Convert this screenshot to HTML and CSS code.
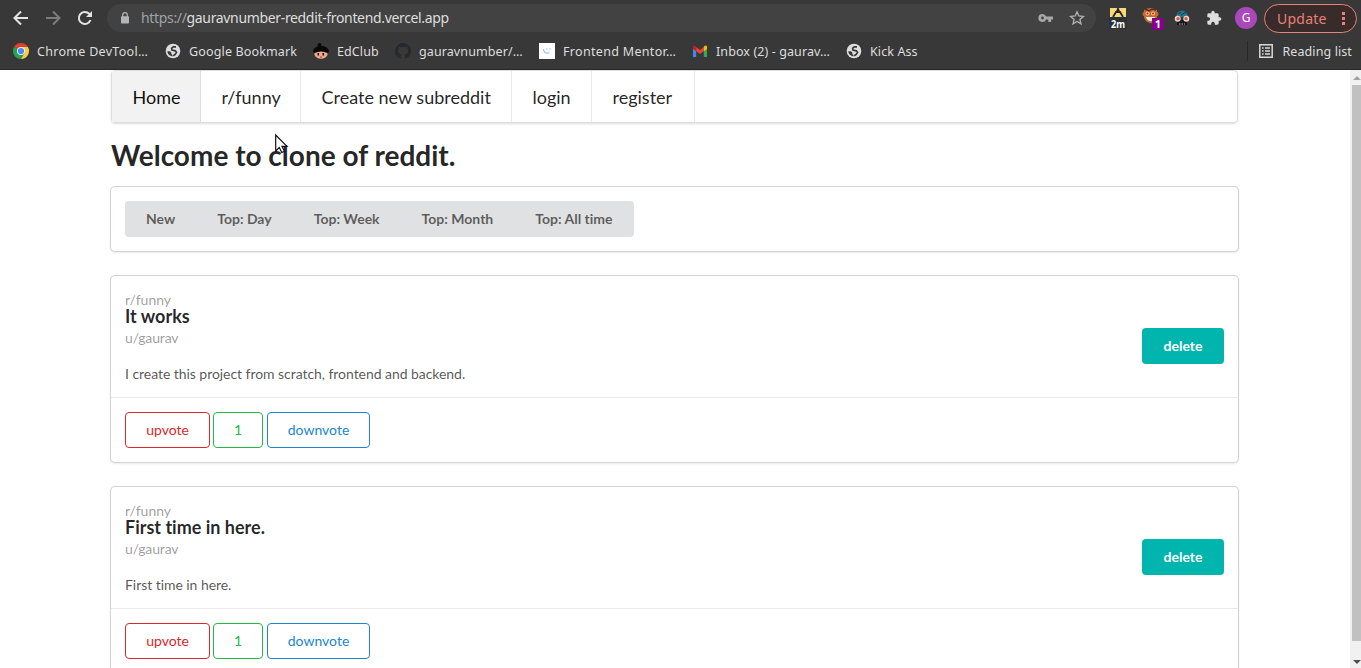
FILE: index.html
```
<!DOCTYPE html>
<html lang="en">
<head>
<meta charset="utf-8">
<title>Reddit clone</title>
<link rel="stylesheet" href="styles.css">
</head>
<body>
<svg width="0" height="0" class="defs">
  <symbol id="globe" viewBox="0 0 16 16"><circle cx="8" cy="8" r="7.300" fill="#dedede"/><path d="M11 3.800H8.300L6.600 5.200 7 7l3.300.8 1.200 1.500-1.300 2.200-2 1.300" fill="none" stroke="#383838" stroke-width="1.700"/><path d="M2.300 8.300h2.500l1.500 1.300v1.600l1.200.8v1.500C4.500 13 2.500 11 2.300 8.300z" fill="#383838"/></symbol>
</svg>
<header class="browser">
  <div class="toolbar">
    <svg class="nav-icon" viewBox="0 0 16 16"><path d="M15 8H2M8 1.500 1.500 8 8 14.500" fill="none" stroke="#e4e4e4" stroke-width="2"/></svg>
    <svg class="nav-icon" viewBox="0 0 16 16"><path d="M1 8h13M8 1.500 14.500 8 8 14.500" fill="none" stroke="#7d7d7d" stroke-width="2"/></svg>
    <svg class="nav-icon" viewBox="0 0 16 16"><path d="M13.500 10A6 6 0 1 1 12.200 3.800L14 5.600" fill="none" stroke="#e4e4e4" stroke-width="2"/><path d="M15 1v6H9z" fill="#e4e4e4"/></svg>
    <div class="address">
      <svg class="lock" viewBox="0 0 8 12"><path d="M1.700 5V3a2.300 2.300 0 0 1 4.600 0v2" fill="none" stroke="#b3b5b8" stroke-width="1.200"/><rect y="4.200" width="8" height="7.400" rx=".8" fill="#b3b5b8"/></svg>
      <span class="url"><span class="scheme">https://</span>gauravnumber-reddit-frontend.vercel.app</span>
      <svg class="key" viewBox="0 0 15 10"><path d="M4.500 1a4 4 0 1 0 3.600 5.500h2.200V9h2.800V6.500H15v-3H8.100A4 4 0 0 0 4.500 1zm0 2.600a1.400 1.400 0 1 1 0 2.800 1.400 1.400 0 0 1 0-2.800z" fill="#a8a8a8" fill-rule="evenodd"/></svg>
      <svg class="star" viewBox="0 0 16 16"><path d="m8 1.800 1.800 4.200 4.600.4-3.500 3 1.100 4.500L8 11.500l-4 2.400 1.100-4.500-3.500-3L6.200 6z" fill="none" stroke="#b4b4b4" stroke-width="1.300"/></svg>
    </div>
    <div class="extensions">
      <svg class="ext" viewBox="0 0 20 24"><path fill="#f8d978" d="M2 2h16v9H2z"/><path d="M10 2v2M5 11l3-5h4l3 5" fill="none" stroke="#272525" stroke-width="1.800"/><circle cx="10" cy="4.800" r="1.800" fill="#272525"/><rect y="11" x="1" width="18" height="12" rx="2" fill="#2b3137"/><text x="10" y="21.500" class="ext-count" textLength="14" lengthAdjust="spacingAndGlyphs">2m</text></svg>
      <svg class="ext face" viewBox="0 0 22 24"><circle cx="3" cy="8" r="2.500" fill="#b76832"/><circle cx="14" cy="8" r="2.500" fill="#b76832"/><path d="M2 4q6-4 13 0v8q-2 6-7 5-5-1-6-6z" fill="#c76b35"/><path d="M3 3 7 5l3-2 4 1" fill="none" stroke="#572d20" stroke-width="1.500"/><circle cx="5.500" cy="7.500" r="2" fill="#f0c789"/><circle cx="11" cy="7.500" r="2" fill="#f0c789"/><circle cx="5.500" cy="7.500" r="1" fill="#d22"/><circle cx="11" cy="7.500" r="1" fill="#d22"/><path d="M4 11h9q-1 4-4.500 4T4 11" fill="#fff0dc"/><rect x="10" y="12" width="12" height="12" fill="#86008b"/><text x="16" y="22" class="ext-count">1</text></svg>
      <svg class="ext goggles" viewBox="0 0 16 16"><path d="M2 7a6 6.500 0 0 1 12 0z" fill="#28738a"/><path d="M4 4 7 2m0 3 5-3" stroke="#173d4c"/><path d="M3 10h10v5H3z" fill="#15191c"/><circle cx="3.700" cy="8.700" r="3" fill="#e9d5d0"/><circle cx="12.300" cy="8.700" r="3" fill="#e9d5d0"/><circle cx="4" cy="8.700" r="1.600" fill="#d85242"/><circle cx="12" cy="8.700" r="1.600" fill="#d85242"/><path d="M5 14h6" stroke="#a6b6c0" stroke-dasharray="1.500 1"/></svg>
      <svg class="ext puzzle" viewBox="0 0 24 24"><path fill="#dedede" d="M20.500 11H19V7a2 2 0 0 0-2-2h-4V3.500a2.500 2.500 0 0 0-5 0V5H4a2 2 0 0 0-2 2v3.800h1.500a2.700 2.700 0 0 1 0 5.400H2V20a2 2 0 0 0 2 2h3.800v-1.500a2.700 2.700 0 0 1 5.400 0V22H17a2 2 0 0 0 2-2v-4h1.500a2.500 2.500 0 0 0 0-5z"/></svg>
      <span class="avatar">G</span>
      <span class="update"><span class="update-label">Update</span><i class="dots"></i></span>
    </div>
  </div>
  <nav class="bookmarks">
    <a class="bookmark b1"><svg viewBox="0 0 16 16"><path d="M8 8 1.070 4A8 8 0 0 1 14.930 4z" fill="#df4034"/><path d="M8 8h0L1.070 4A8 8 0 0 0 8 16l3.500-6z" fill="#25a353"/><path d="M8 4h6.930A8 8 0 0 1 8 16l3.500-6z" fill="#fbcd3f"/><circle cx="8" cy="8" r="4" fill="#f4f4f4"/><circle cx="8" cy="8" r="3.100" fill="#4a8af4"/></svg><span>Chrome DevTool…</span></a>
    <a class="bookmark b2"><svg viewBox="0 0 16 16"><use href="#globe"/></svg><span>Google Bookmark</span></a>
    <a class="bookmark b3"><svg viewBox="0 0 16 16"><circle cx="6.500" cy="2" r="2" fill="#080808"/><ellipse cx="8" cy="8" rx="7.800" ry="5" fill="#080808"/><path d="M1.500 10q6.500-3 13 0v2q-2 3.800-6.500 3.800T1.500 12z" fill="#efaa8c"/><path d="M5.300 10v2.500m5-2.500v2.500" stroke="#15100f" stroke-width="1.600"/><path d="M7 14h2" stroke="#b33"/></svg><span>EdClub</span></a>
    <a class="bookmark b4"><svg viewBox="0 0 16 16"><path fill="#25282e" d="M8 0a8 8 0 0 0-2.530 15.590c.4.070.55-.17.55-.38v-1.490c-2.230.48-2.690-.94-2.690-.94-.36-.92-.89-1.170-.89-1.170-.73-.49.050-.48.050-.48.8.060 1.230.82 1.230.82.71 1.220 1.870.87 2.330.67.070-.52.280-.87.500-1.070-1.780-.2-3.640-.89-3.640-3.950 0-.87.31-1.590.82-2.150-.08-.2-.36-1.020.08-2.120 0 0 .67-.21 2.200.82a7.600 7.600 0 0 1 4 0c1.530-1.040 2.200-.82 2.200-.82.44 1.100.16 1.920.08 2.120.51.56.82 1.270.82 2.150 0 3.070-1.870 3.750-3.650 3.950.29.25.54.73.54 1.480v2.180c0 .21.150.46.550.38A8 8 0 0 0 8 0z"/></svg><span>gauravnumber/…</span></a>
    <a class="bookmark b5"><svg viewBox="0 0 16 16"><path fill="#fff" d="M0 0h16v16H0z"/><path d="M4.500 6q0 5 6 4" fill="none" stroke="#9ac1df" stroke-width="1.200"/><path d="M8 5v2m3-2v2" stroke="#b6c9da"/></svg><span>Frontend Mentor…</span></a>
    <a class="bookmark b6"><svg viewBox="0 0 16 16"><path d="M1 5v9h3.200V7z" fill="#4285f4"/><path d="M11.800 7v7H15V5z" fill="#34a853"/><path d="M4.200 4 8 7l3.800-3v4.200L8 11 4.200 8.200z" fill="#ea4335"/><path d="M1 4q0-2.200 2-1.300l1.200 1v4.500L1 6z" fill="#c5221f"/><path d="M11.800 3.700 13 2.700q2-.8 2 1.300v2l-3.200 2.200z" fill="#fbbc04"/></svg><span>Inbox (2) - gaurav…</span></a>
    <a class="bookmark b7"><svg viewBox="0 0 16 16"><use href="#globe"/></svg><span>Kick Ass</span></a>
    <a class="bookmark reading"><svg viewBox="0 0 16 16"><path d="M1.800 1.800h12.400v12.400H1.800z" fill="none" stroke="#d8d8d8" stroke-width="1.500"/><path d="M4 5h1.600M7 5h5M4 8h1.600M7 8h5M4 11h1.600M7 11h5" stroke="#d8d8d8" stroke-width="1.400"/></svg><span>Reading list</span></a>
  </nav>
</header>
<div class="viewport">
  <main class="container">
    <nav class="menu">
      <a class="item active home">Home</a><a class="item funny">r/funny</a><a class="item create">Create new subreddit</a><a class="item login">login</a><a class="item register">register</a>
    </nav>
    <h1>Welcome to clone of reddit.</h1>
    <section class="card filters">
      <div class="button-group"><button>New</button><button>Top: Day</button><button>Top: Week</button><button>Top: Month</button><button>Top: All time</button></div>
    </section>
    <article class="card">
      <div class="content">
        <div class="post">
          <div class="meta">r/funny</div>
          <h2>It works</h2>
          <div class="meta author">u/gaurav</div>
          <p>I create this project from scratch, frontend and backend.</p>
        </div>
        <button class="delete">delete</button>
      </div>
      <div class="votes"><button class="vote up">upvote</button><button class="vote count">1</button><button class="vote down">downvote</button></div>
    </article>
    <article class="card">
      <div class="content">
        <div class="post">
          <div class="meta">r/funny</div>
          <h2>First time in here.</h2>
          <div class="meta author">u/gaurav</div>
          <p>First time in here.</p>
        </div>
        <button class="delete">delete</button>
      </div>
      <div class="votes"><button class="vote up">upvote</button><button class="vote count">1</button><button class="vote down">downvote</button></div>
    </article>
  </main>
  <div class="scrollbar"><i class="arrow-up"></i><i class="thumb"></i><i class="arrow-down"></i></div>
</div>
<svg class="cursor" viewBox="0 0 13 20"><path d="M.7 1v16l3.600-3.500 2.500 5 2.600-1.300L7 12.400h5z" fill="#fff" stroke="#111" stroke-width="1.200"/></svg>
</body>
</html>
```
FILE: styles.css
```
* { box-sizing: border-box; }
html, body { height: 100%; overflow: hidden; }
body { margin: 0; background: #fff; color: rgba(0,0,0,.87); font: 14px/18px Lato, sans-serif; font-variant-ligatures: none; }
button { font: inherit; font-variant-ligatures: none; margin: 0; border: 0; }
svg { display: block; flex: none; overflow: visible; }
.defs { position: absolute; }

/* Browser frame */
.browser { height: 70px; background: #383838; border-bottom: 1px solid #282828; color: #dedede; font-family: "Noto Sans", sans-serif; }
.toolbar { height: 36px; display: flex; align-items: center; padding-left: 13px; }
.nav-icon { width: 16px; height: 16px; margin-right: 16px; }
.address { width: 989px; height: 28px; margin-left: -2px; border-radius: 14px; background: #424242; display: flex; align-items: center; padding: 0 11px 0 14px; }
.lock { width: 8px; height: 12px; }
.url { margin-left: 12px; width: 310px; font-size: 14px; white-space: nowrap; letter-spacing: -.34px; }
.scheme { color: #a0a3a8; }
.key { width: 15px; height: 10px; margin-left: auto; }
.star { width: 16px; height: 16px; margin-left: 16px; }
.extensions { display: flex; align-items: center; padding-left: 12px; }
.ext { width: 20px; height: 24px; }
.face { width: 22px; margin-left: 14px; }
.goggles { width: 16px; height: 16px; margin-left: 10px; }
.puzzle { width: 16px; height: 16px; margin-left: 16px; }
.ext-count { font: bold 11px "Noto Sans", sans-serif; fill: #fff; text-anchor: middle; }
.avatar { width: 22px; height: 22px; margin-left: 13px; border-radius: 50%; background: #ab47bc; color: #fff; font: 12px/22px "Noto Sans", sans-serif; text-align: center; }
.update { width: 93px; height: 29px; margin-left: 7px; border: 1px solid #e68277; border-radius: 15px; background: #382b2a; color: #e68277; display: flex; align-items: center; padding: 0 11px 0 12px; font-size: 14px; justify-content: space-between; }
.update-label { letter-spacing: .25px; padding-top: 1px; }
.dots { width: 3px; height: 13px; background: radial-gradient(circle at 1.5px 1.5px, #e68277 1.5px, transparent 1.7px) 0 0 / 3px 5px; }
.bookmarks { height: 30px; display: flex; align-items: center; padding-left: 13px; font-size: 12.5px; letter-spacing: .1px; }
.bookmark { display: flex; align-items: center; white-space: nowrap; gap: 8px; }
.bookmark span { padding-top: 2px; }
.bookmark svg { width: 16px; height: 16px; }
.b1 { width: 152px; letter-spacing: .3px; }
.b2 { width: 148px; letter-spacing: .15px; }
.b3 { width: 82px; }
.b4 { width: 144px; }
.b5 { width: 153px; letter-spacing: .32px; }
.b6 { width: 154px; }
.reading { margin-left: auto; margin-right: 9px; padding-left: 10px; border-left: 1px solid #282828; }

/* Page */
.viewport { height: 598px; overflow: hidden; display: flex; justify-content: space-between; }
.container { width: 1127px; margin-left: 111px; }
.menu { height: 53px; display: flex; border: 1px solid rgba(34,36,38,.15); border-radius: 4px; box-shadow: 0 1px 2px rgba(34,36,38,.15); font-size: 18px; }
.item { display: flex; align-items: center; padding-left: 20.5px; white-space: nowrap; border-right: 1px solid rgba(34,36,38,.1); }
.item.active { background: #f2f2f2; color: rgba(0,0,0,.95); }
.home { width: 89px; }
.funny { width: 100px; }
.create { width: 211px; }
.login { width: 80px; }
.register { width: 103px; }
h1 { margin: 14px 0; font-size: 28px; line-height: 36px; font-weight: 700; }
.card { margin-bottom: 25px; border-radius: 4px; box-shadow: 0 1px 3px 0 #d4d4d5, 0 0 0 1px #d4d4d5; }
.filters { height: 64px; padding: 14px; }
.button-group { display: inline-flex; height: 36px; border-radius: 4px; background: #e0e1e2; overflow: hidden; }
.button-group button { padding: 0 21px; background: none; color: rgba(0,0,0,.6); font-weight: 700; line-height: 14px; }
.content { height: 121px; padding: 14px; display: flex; justify-content: space-between; align-items: flex-start; }
.post { padding-top: 2px; }
.meta { color: rgba(0,0,0,.4); line-height: 16px; }
h2 { margin: 0; font-size: 18px; line-height: 16px; font-weight: 700; color: rgba(0,0,0,.85); }
.author { margin-top: 6px; letter-spacing: -.15px; }
p { margin: 19px 0 0; line-height: 18px; color: rgba(0,0,0,.68); letter-spacing: -.05px; }
.delete { width: 82px; height: 36px; margin-top: 38px; border-radius: 4px; background: #00b5ad; color: #fff; font-weight: 700; }
.votes { height: 65px; padding: 14px; border-top: 1px solid rgba(34,36,38,.1); display: flex; }
.vote { height: 36px; border: 1px solid; border-radius: 4px; background: none; padding: 0; }
.up { width: 85px; color: #db2828; margin-right: 3px; }
.count { width: 50px; color: #21ba45; margin-right: 4px; }
.down { width: 103px; color: #2185d0; }

.scrollbar { width: 11px; background: #f1f1f1; display: flex; flex-direction: column; align-items: center; padding-left: 2px; }
.arrow-up, .arrow-down { border: 4px solid transparent; height: 4px; width: 8px; }
.arrow-up { border-top: 0; border-bottom-color: #a3a3a3; margin: 6px 0 5px; }
.thumb { width: 9px; height: 556px; background: #c1c1c1; }
.arrow-down { border-bottom: 0; border-top-color: #505050; margin-top: 19px; }
.cursor { position: absolute; left: 275px; top: 134px; width: 13px; height: 20px; }
```
